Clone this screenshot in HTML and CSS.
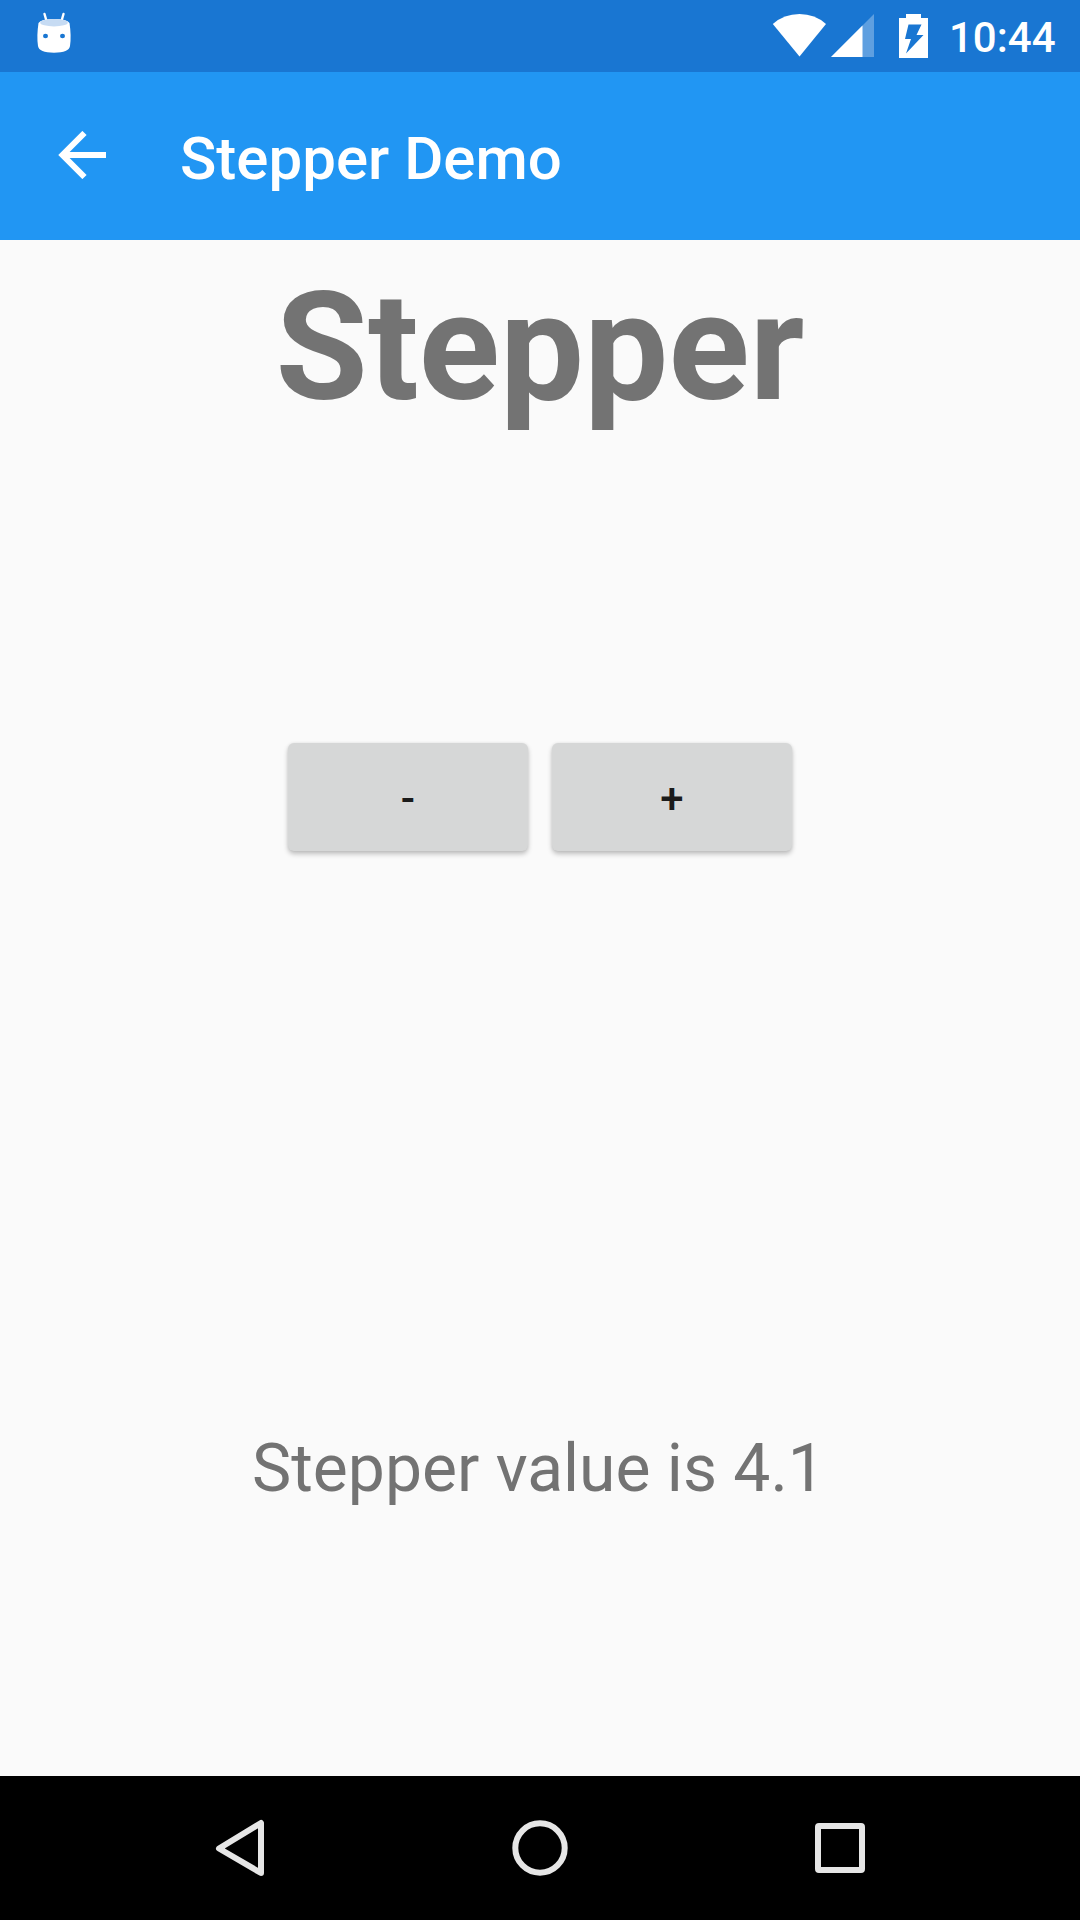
FILE: index.html
```
<!DOCTYPE html>
<html lang="en">
<head>
<meta charset="utf-8">
<title>Stepper Demo</title>
<link rel="stylesheet" href="styles.css">
</head>
<body>
<header class="status-bar">
  <svg class="debug-icon" width="36" height="42" viewBox="36 12 36 42">
    <path d="M44.500 14 46.500 21M63.500 14 61.500 21" stroke="#fff" stroke-width="2.400" stroke-linecap="round"/>
    <path d="M38.500 23Q41 19 54 19T69.500 23Q71.500 36 70 46Q69 52.700 54 52.700T38 46Q36.500 36 38.500 23Z" fill="#fff"/>
    <ellipse cx="54" cy="22.700" rx="13.800" ry="3.700" fill="#c6dbf3"/>
    <ellipse cx="45.500" cy="36" rx="2.500" ry="2.200" fill="#1976d2"/>
    <ellipse cx="62.500" cy="36" rx="2.500" ry="2.200" fill="#1976d2"/>
  </svg>
  <div class="status-right">
    <svg class="wifi" width="54" height="44" viewBox="772 14 54 44"><path d="M772.800 24Q784 14 799.500 14T826 24L799.500 56.500Z" fill="#fff"/></svg>
    <svg class="signal" width="43" height="44" viewBox="831 14 43 44"><path d="M874 14V57H831Z" fill="#5e9fe0"/><path d="M862.500 25.500V57H831Z" fill="#fff"/></svg>
    <svg class="battery" width="29" height="44" viewBox="899 14 29 44"><path d="M906 14H921V18H928V58H899V18H906Z" fill="#fff"/><path d="M908.500 24.500H921.500L916.500 35H923.500L906 53.500L911 39H905Z" fill="#1976d2"/></svg>
    <span class="clock">10:44</span>
  </div>
</header>
<nav class="app-bar">
  <svg class="back" width="50" height="48" viewBox="57 131 50 48"><path d="M106 155H63.500M84.500 133 62.500 155 84.500 177" fill="none" stroke="#fff" stroke-width="6"/></svg>
  <h1 class="title">Stepper Demo</h1>
</nav>
<main class="content">
  <h2 class="heading">Stepper</h2>
  <div class="stepper">
    <button class="step" type="button">-</button>
    <button class="step" type="button">+</button>
  </div>
  <p class="value">Stepper value is 4.1</p>
</main>
<footer class="nav-bar">
  <svg width="60" height="60" viewBox="210 1818 60 60"><path d="M261 1823V1873L219 1848.500Z"/></svg>
  <svg width="60" height="60" viewBox="510 1818 60 60"><circle cx="540" cy="1848" r="24.700"/></svg>
  <svg width="60" height="60" viewBox="810 1818 60 60"><rect x="818" y="1826" width="44" height="44" rx="1"/></svg>
</footer>
</body>
</html>
```

FILE: styles.css
```
* { box-sizing: border-box; }
body {
  margin: 0;
  width: 1080px;
  height: 1920px;
  display: flex;
  flex-direction: column;
  background: #fafafa;
  font-family: Roboto, sans-serif;
  overflow: hidden;
}
svg { display: block; flex: none; }
.status-bar {
  height: 72px;
  padding: 12px 24px 0 36px;
  display: flex;
  justify-content: space-between;
  align-items: flex-start;
  background: #1976d2;
}
.status-right { display: flex; align-items: flex-start; padding-top: 2px; }
.signal { margin-left: 5px; }
.battery { margin-left: 25px; }
.clock {
  width: 107px;
  margin-left: 21px;
  color: #fff;
  font-size: 42px;
  font-weight: 500;
  line-height: 48px;
  white-space: nowrap;
}
.app-bar {
  height: 168px;
  padding: 0 57px;
  display: flex;
  align-items: center;
  background: #2196f3;
  color: #fff;
}
.back { margin-bottom: 2px; }
.title {
  margin: 6px 0 0 73px;
  font-size: 60px;
  font-weight: 500;
  line-height: 70px;
}
.content {
  height: 1536px;
  display: flex;
  flex-direction: column;
  align-items: center;
  color: #737373;
}
.heading {
  margin: 0;
  font-size: 150px;
  font-weight: 700;
  line-height: 217px;
}
.stepper { display: flex; gap: 24px; margin-top: 286px; }
.step {
  width: 240px;
  height: 108px;
  padding: 4px 0 0;
  border: 0;
  border-radius: 6px;
  background: #d6d7d7;
  color: #1b1b1b;
  font: 500 42px/104px Roboto, sans-serif;
  box-shadow: 0 3px 5px rgba(0, 0, 0, .24), 0 0 3px rgba(0, 0, 0, .07);
}
.value { margin: 579px 3px 0 0; font-size: 66px; line-height: 78px; }
.nav-bar {
  height: 144px;
  padding: 0 210px;
  display: flex;
  align-items: center;
  justify-content: space-between;
  background: #000;
}
.nav-bar svg { fill: none; stroke: #e6e6e6; stroke-width: 6; stroke-linejoin: round; }
```
